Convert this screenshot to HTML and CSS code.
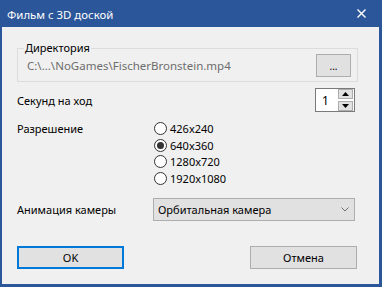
FILE: index.html
```html
<!DOCTYPE html>
<html lang="ru">
<head>
<meta charset="utf-8">
<title>Фильм с 3D доской</title>
<link rel="stylesheet" href="styles.css">
</head>
<body>
<div class="window">
  <div class="titlebar">
    <span class="title">Фильм с 3D доской</span>
    <svg class="close" width="9" height="9" viewBox="0 0 9 9"><path d="M0.5 0.5 L8.5 8.5 M8.5 0.5 L0.5 8.5" stroke="#fff" stroke-width="1.4" fill="none"/></svg>
  </div>
  <div class="client">
    <fieldset class="group">
      <legend class="legend">Директория</legend>
      <div class="group-row">
        <span class="path">C:\...\NoGames\FischerBronstein.mp4</span>
        <button class="btn browse">...</button>
      </div>
    </fieldset>

    <div class="row seconds">
      <span class="label">Секунд на ход</span>
      <div class="spin">
        <span class="spin-value">1</span>
        <div class="spin-btns">
          <span class="spin-btn"><svg width="7" height="4" viewBox="0 0 7 4"><path d="M0 4 L3.5 0 L7 4 Z" fill="#000"/></svg></span>
          <span class="spin-btn"><svg width="7" height="4" viewBox="0 0 7 4"><path d="M0 0 L3.5 4 L7 0 Z" fill="#000"/></svg></span>
        </div>
      </div>
    </div>

    <div class="grid res">
      <span class="label res-label">Разрешение</span>
      <div class="radios">
        <label class="radio"><span class="circle"></span>426x240</label>
        <label class="radio"><span class="circle checked"></span>640x360</label>
        <label class="radio"><span class="circle"></span>1280x720</label>
        <label class="radio"><span class="circle"></span>1920x1080</label>
      </div>
    </div>

    <div class="grid anim">
      <span class="label">Анимация камеры</span>
      <div class="combo">
        <span>Орбитальная камера</span>
        <svg width="8" height="5" viewBox="0 0 8 5"><path d="M0.5 0.5 L4 4 L7.5 0.5" stroke="#707070" stroke-width="1" fill="none"/></svg>
      </div>
    </div>

    <div class="buttons">
      <button class="btn dlg ok">OK</button>
      <button class="btn dlg cancel">Отмена</button>
    </div>
  </div>
</div>
</body>
</html>
```
FILE: styles.css
```css
* { box-sizing: border-box; }
html, body { margin: 0; padding: 0; }
body {
  width: 382px;
  height: 287px;
  overflow: hidden;
  background: #2b579a;
  font-family: "Noto Sans", "Open Sans", sans-serif;
  font-size: 11px;
  color: #000;
}
.window {
  display: flex;
  flex-direction: column;
  height: 287px;
}
.titlebar {
  height: 27px;
  display: flex;
  align-items: center;
  justify-content: space-between;
  padding: 2px 16px 0 7px;
  color: #fff;
}
.title { line-height: 14px; font-size: 11.4px; }
.close { display: block; margin-top: -3px; }
.client {
  flex: 1;
  margin: 0 3px 3px 2px;
  background: #f0f0f0;
  padding: 15px 21px 0 15px;
  display: flex;
  flex-direction: column;
}
.group {
  margin: 0;
  padding: 0 6px 4px 9px;
  border: 1px solid #dcdcdc;
  min-width: 0;
}
.legend {
  margin-left: -3px;
  padding: 0 1px;
  line-height: 12px;
}
.group-row {
  display: flex;
  align-items: center;
  justify-content: space-between;
}
.path { color: #6d6d6d; font-size: 11.5px; }
.btn {
  font: inherit;
  color: #000;
  background: #e1e1e1;
  border: 1px solid #adadad;
  margin: 0;
  padding: 0;
}
.browse {
  width: 35px;
  height: 23px;
  font-size: 10px;
  line-height: 14px;
}
.row {
  display: flex;
  align-items: center;
  justify-content: space-between;
}
.seconds {
  margin-top: 6px;
  padding-right: 3px;
}
.spin {
  width: 40px;
  height: 24px;
  border: 1px solid #7a7a7a;
  background: #fff;
  display: flex;
  align-items: center;
  justify-content: space-between;
  padding: 0 1px 0 6px;
  font-size: 12px;
}
.spin-btns {
  display: flex;
  flex-direction: column;
  gap: 2px;
}
.spin-btn {
  width: 15px;
  height: 10px;
  background: #e1e1e1;
  border: 1px solid #adadad;
  display: flex;
  align-items: center;
  justify-content: center;
}
.spin-btn svg { display: block; }
.grid {
  display: grid;
  grid-template-columns: 137px 1fr;
  align-items: center;
}
.res {
  margin-top: 8px;
  align-items: start;
}
.res-label { line-height: 17px; }
.radios {
  display: flex;
  flex-direction: column;
}
.radio {
  display: flex;
  align-items: center;
  height: 16.7px;
  gap: 3px;
}
.circle {
  width: 13px;
  height: 13px;
  border: 1px solid #333;
  border-radius: 50%;
  background: #fff;
  display: flex;
  align-items: center;
  justify-content: center;
}
.circle.checked::after {
  content: "";
  width: 7px;
  height: 7px;
  border-radius: 50%;
  background: #333;
}
.anim {
  margin-top: 11px;
  grid-template-columns: 136px 1fr;
  padding-right: 3px;
}
.combo {
  height: 23px;
  background: #e1e1e1;
  border: 1px solid #adadad;
  display: flex;
  align-items: center;
  justify-content: space-between;
  padding: 0 5px 0 4px;
}
.combo svg { display: block; }
.buttons {
  margin-top: 25px;
  display: flex;
  justify-content: space-between;
  padding: 0 1px 0 0;
}
.dlg {
  width: 107px;
  height: 23px;
}
.ok {
  border: 2px solid #0078d7;
}
```
